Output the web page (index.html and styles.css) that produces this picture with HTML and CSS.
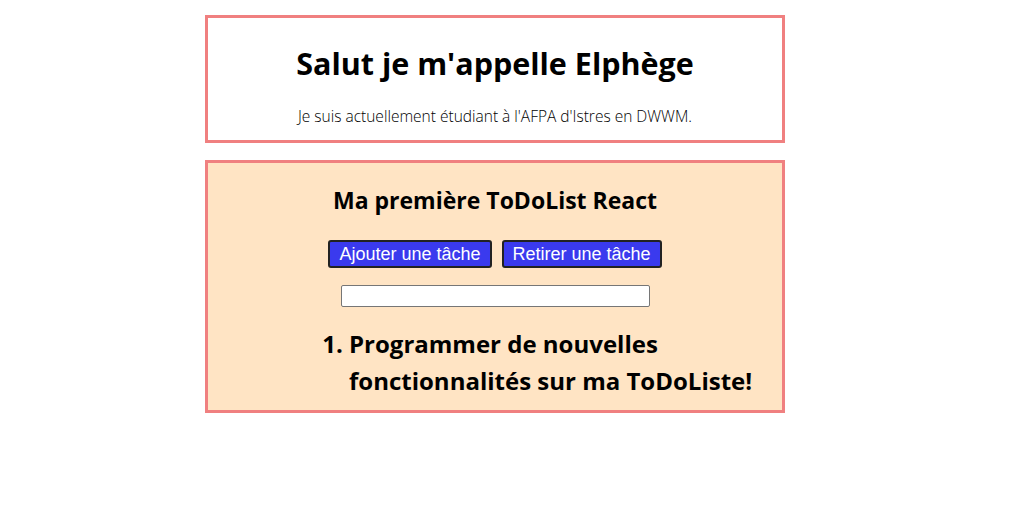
FILE: index.html
```html
<!DOCTYPE html>
<html lang="fr">
<head>
    <meta charset="UTF-8">
    <meta name="viewport" content="width=device-width, initial-scale=1.0">
    <title>Ma ToDoList React</title>
    <link rel="stylesheet" href="styles.css">
</head>
<body>
    <div class="app">
        <header class="presentation">
            <h1>Salut je m'appelle Elphège</h1>
            <p>Je suis actuellement étudiant à l'AFPA d'Istres en DWWM.</p>
        </header>

        <section class="todo">
            <h2>Ma première ToDoList React</h2>
            <div class="actions">
                <button class="btn">Ajouter une tâche</button>
                <button class="btn">Retirer une tâche</button>
            </div>
            <input type="text" class="task-input">
            <ol class="tasks">
                <li>Programmer de nouvelles fonctionnalités sur ma ToDoListe!</li>
            </ol>
        </section>
    </div>
</body>
</html>
```

FILE: styles.css
```css
body {
    margin: 8px;
    font-family: "Open Sans", sans-serif;
    background-color: white;
    color: black;
}
.app {
    width: 580px;
    margin-left: 197px;
    padding-top: 7px;
}
.presentation,
.todo {
    box-sizing: border-box;
    border: 3px solid lightcoral;
    text-align: center;
}
.presentation {
    height: 128px;
}
.presentation h1 {
    margin: 24px 0 0;
    font-size: 30.5px;
    line-height: 42px;
    font-weight: bold;
}
.presentation p {
    margin: 22px 0 0;
    font-size: 15.5px;
    line-height: 20px;
    font-weight: 300;
}
.todo {
    margin-top: 17px;
    height: 253px;
    background-color: bisque;
}
.todo h2 {
    margin: 21px 0 0;
    font-size: 23px;
    line-height: 32px;
}
.actions {
    margin-top: 24px;
    display: flex;
    justify-content: center;
    gap: 10px;
}
.btn {
    box-sizing: border-box;
    height: 28px;
    padding: 0 9px;
    font-family: "Liberation Sans", Arial, sans-serif;
    font-size: 18px;
    color: white;
    background-color: #3a3aee;
    border: 2px solid #222;
    border-radius: 3px;
    cursor: pointer;
}
.task-input {
    display: block;
    box-sizing: border-box;
    width: 309px;
    height: 22px;
    margin: 17px auto 0;
    border: 1px solid #767676;
    border-radius: 2px;
    background: white;
}
.tasks {
    margin: 18px 0 0 101px;
    padding-left: 40px;
    text-align: left;
    font-size: 24px;
    line-height: 37px;
    font-weight: bold;
}
```
